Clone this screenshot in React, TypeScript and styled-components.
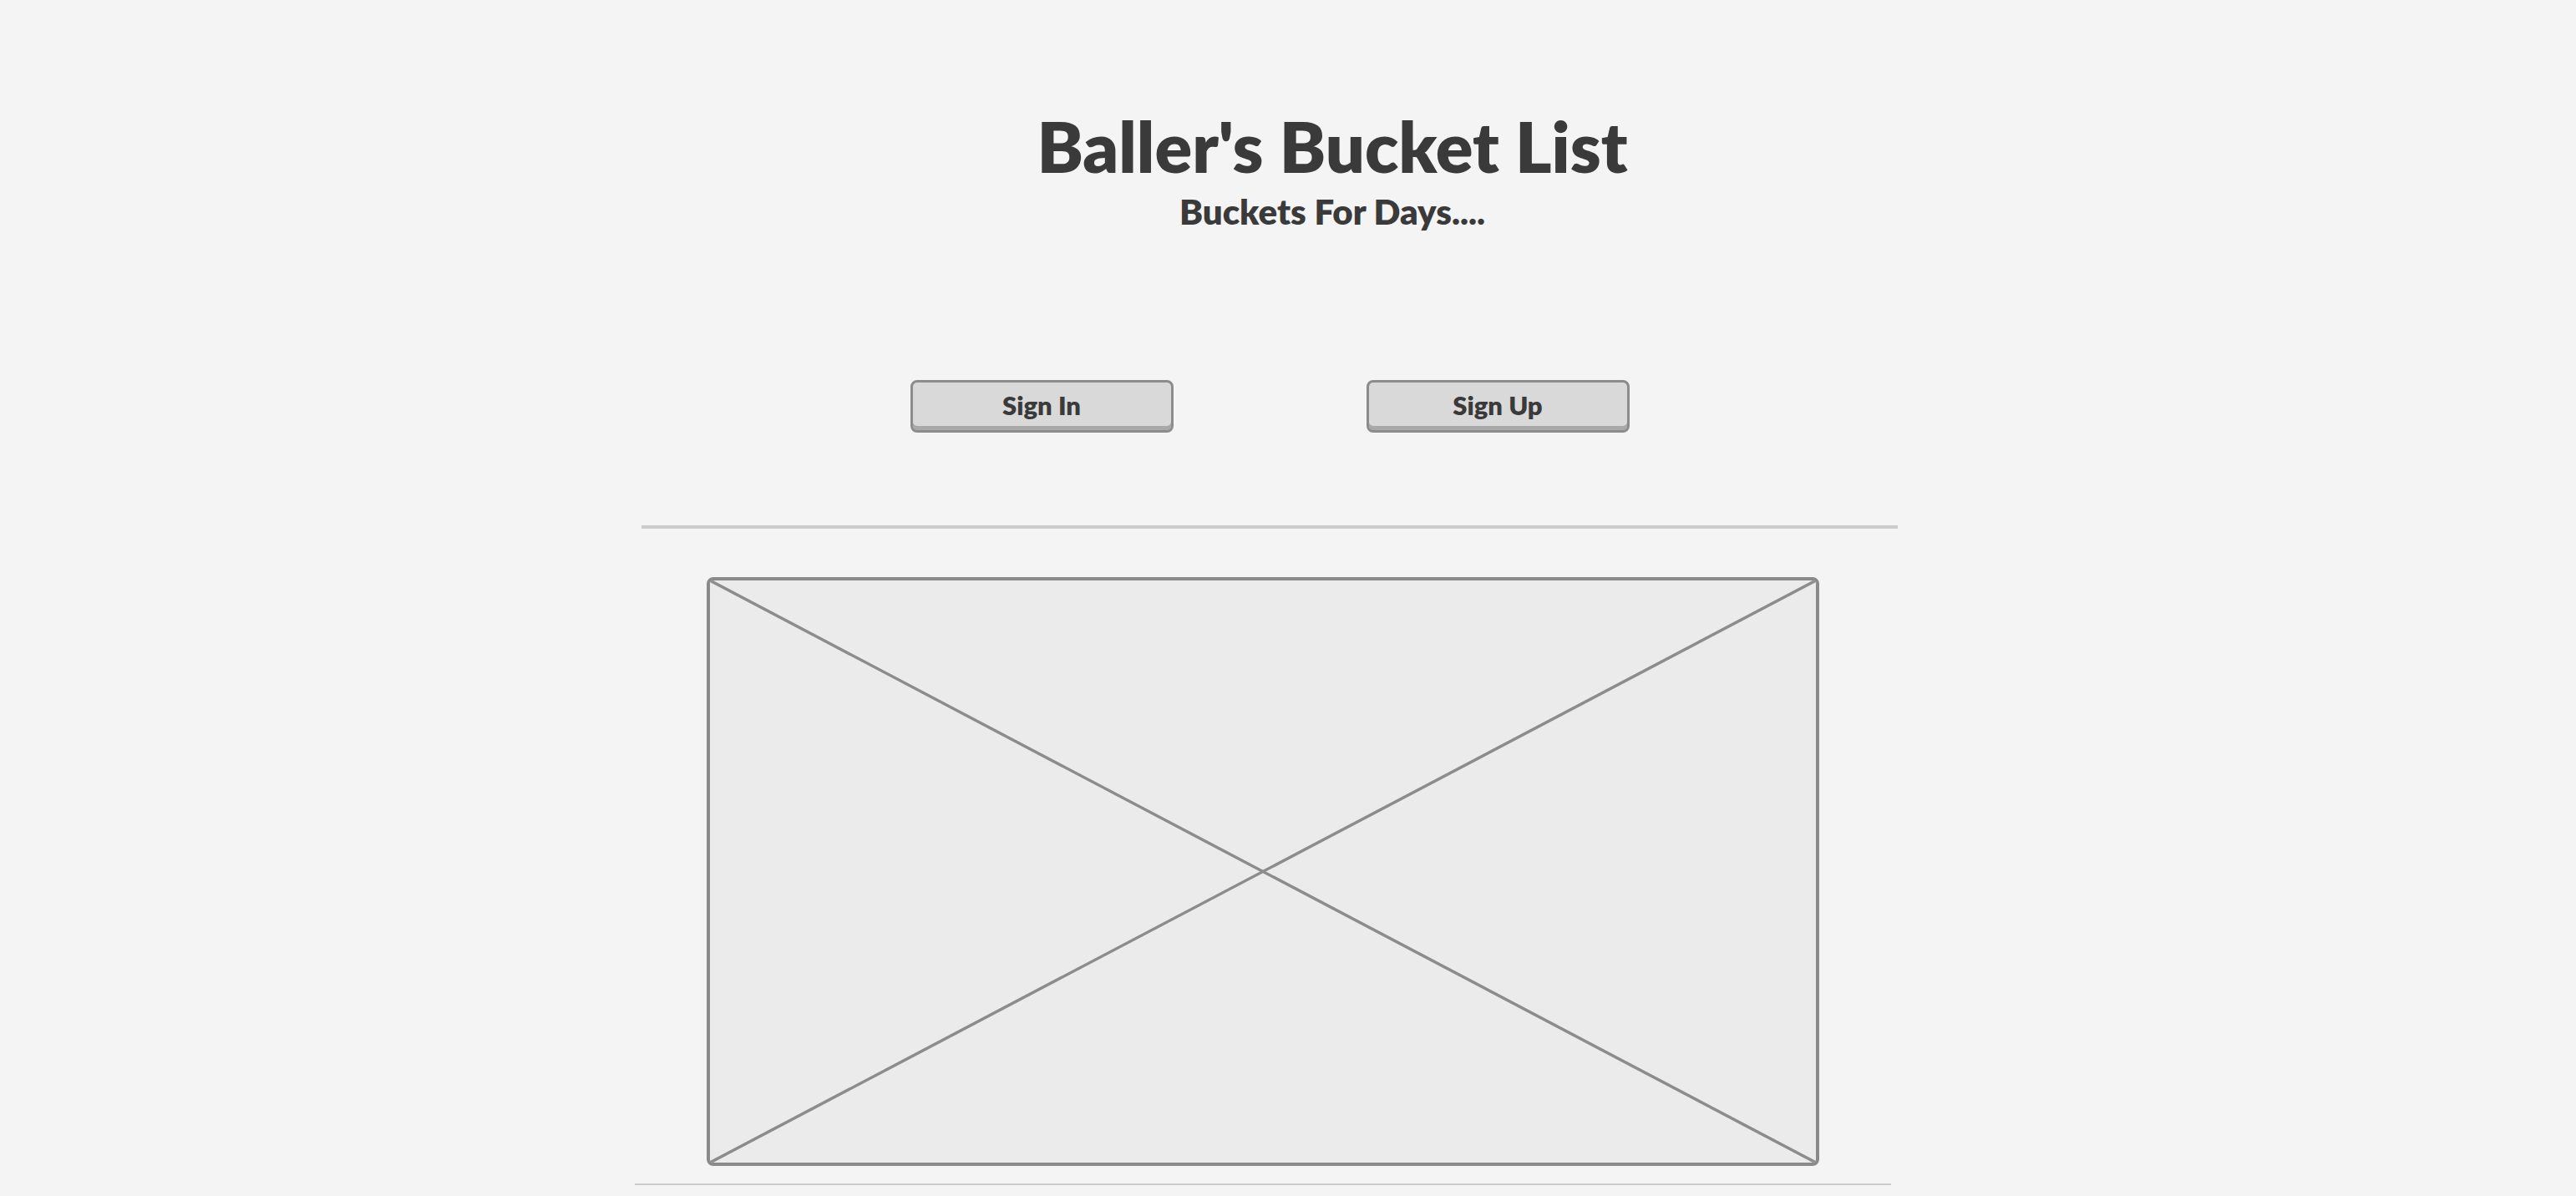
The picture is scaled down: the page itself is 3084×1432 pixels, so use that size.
import styled, { createGlobalStyle } from 'styled-components';

const GlobalStyle = createGlobalStyle`
  html, body {
    margin: 0;
    padding: 0;
    background: #f4f4f4;
  }
  body {
    font-family: Lato, "Open Sans", sans-serif;
    color: #3a3a3a;
  }
`;

const Page = styled.div`
  width: 3084px;
  height: 1432px;
  display: flex;
  flex-direction: column;
  overflow: hidden;
`;

const Header = styled.header`
  display: flex;
  flex-direction: column;
  align-items: center;
  padding-top: 130px;
  padding-left: 106px;
`;

const Title = styled.h1`
  margin: 0;
  font-size: 83px;
  line-height: 90px;
  font-weight: 800;
`;

const Subtitle = styled.h2`
  margin: 8px 0 0;
  font-size: 42px;
  line-height: 50px;
  font-weight: 800;
`;

const Section = styled.section<{ $left: number }>`
  width: 1504px;
  margin-left: ${(p) => p.$left}px;
  display: flex;
  flex-direction: column;
`;

const ButtonRow = styled.div`
  display: flex;
  justify-content: center;
  gap: 231px;
  margin-top: 177px;
  margin-bottom: 111px;
`;

const Button = styled.button`
  width: 315px;
  height: 63px;
  box-sizing: border-box;
  border: 3px solid #8c8c8c;
  border-radius: 8px;
  background: #d9d9d9;
  box-shadow: inset 0 -5px 0 #a9a9a9;
  font-family: Lato, "Open Sans", sans-serif;
  font-weight: 800;
  font-size: 31px;
  color: #3a3a3a;
  padding: 0 0 4px;
  cursor: pointer;
`;

const Divider = styled.hr<{ $weight: number; $gap?: number }>`
  margin: ${(p) => p.$gap ?? 0}px 0 0;
  border: none;
  height: ${(p) => p.$weight}px;
  background: #cbcbcb;
  width: 100%;
`;

const Placeholder = styled.div`
  width: 1332px;
  height: 705px;
  margin: 58px 0 0 78px;
  box-sizing: border-box;
  border: 4px solid #8a8a8a;
  border-radius: 8px;
  background: #ebebeb;
  overflow: hidden;

  svg {
    display: block;
    width: 100%;
    height: 100%;
  }
`;

export default function App() {
  return (
    <Page>
      <GlobalStyle />
      <Header>
        <Title>Baller's Bucket List</Title>
        <Subtitle>Buckets For Days....</Subtitle>
      </Header>
      <Section $left={768}>
        <ButtonRow>
          <Button>Sign In</Button>
          <Button>Sign Up</Button>
        </ButtonRow>
        <Divider $weight={4} />
        <Placeholder>
          <svg viewBox="0 0 100 100" preserveAspectRatio="none">
            <line x1="0" y1="0" x2="100" y2="100" stroke="#8c8c8c" strokeWidth="3.5" vectorEffect="non-scaling-stroke" />
            <line x1="100" y1="0" x2="0" y2="100" stroke="#8c8c8c" strokeWidth="3.5" vectorEffect="non-scaling-stroke" />
          </svg>
        </Placeholder>
      </Section>
      <Section $left={760}>
        <Divider $weight={2} $gap={21} />
      </Section>
    </Page>
  );
}
